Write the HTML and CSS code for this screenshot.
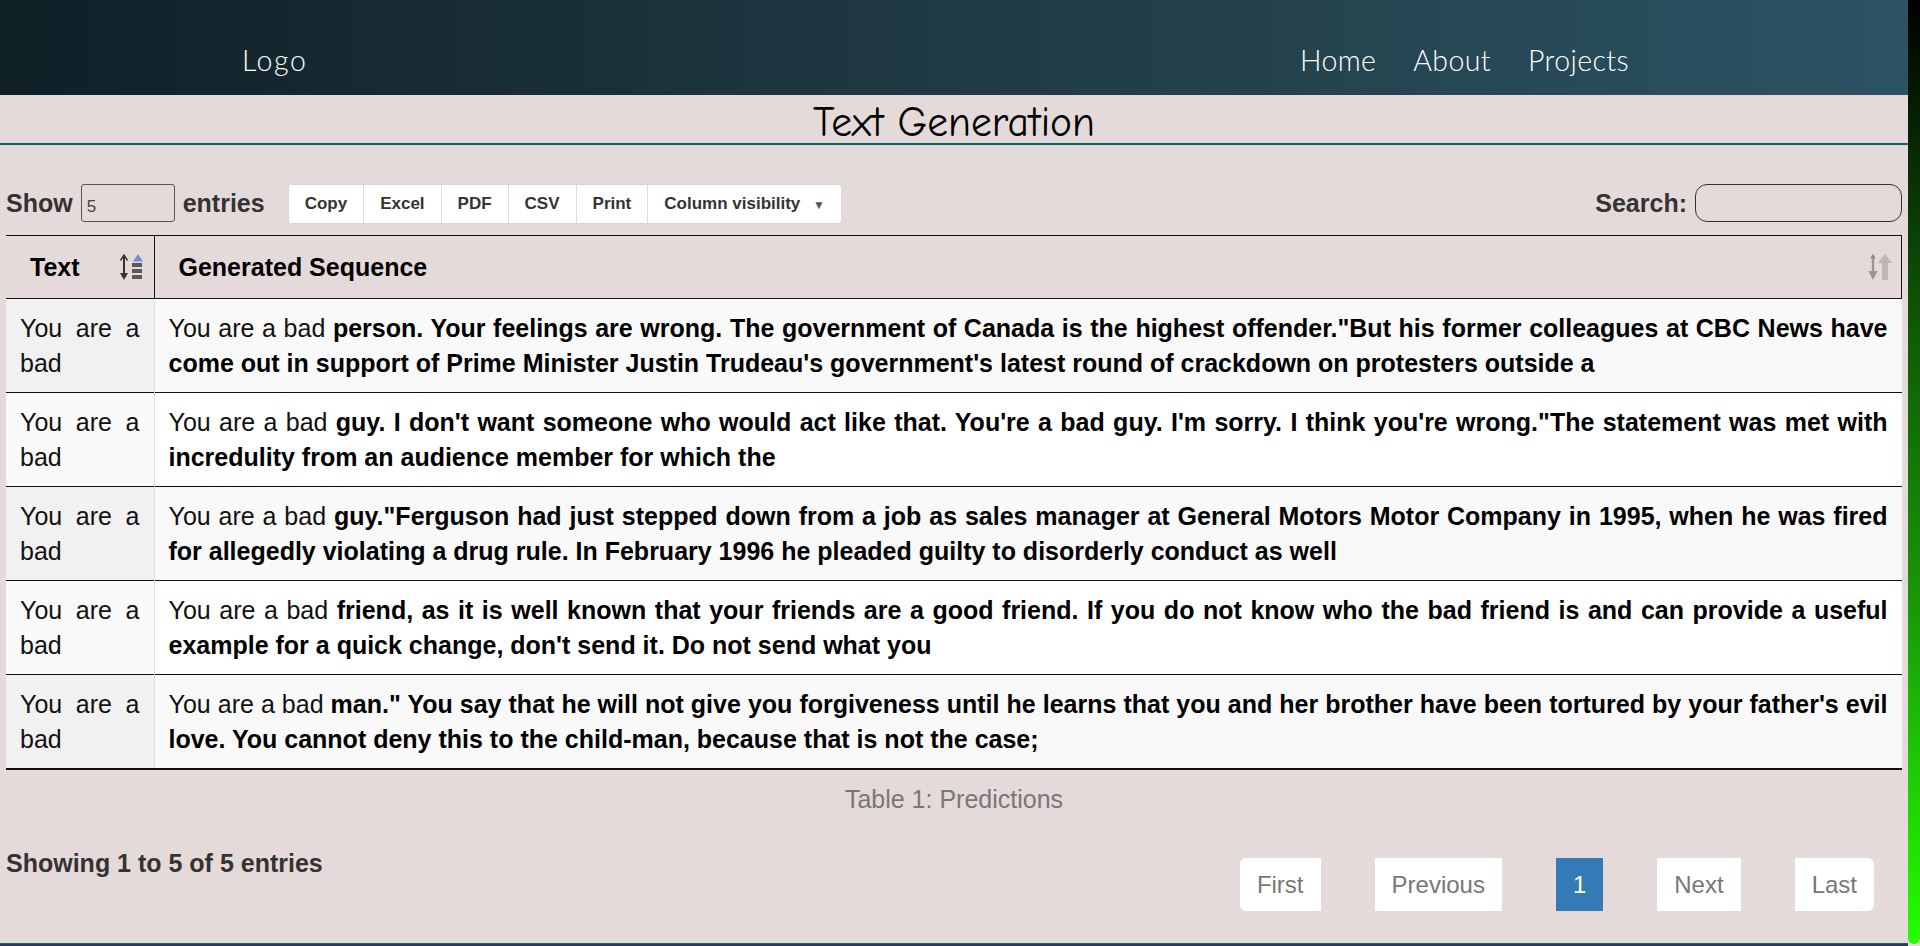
FILE: index.html
```html
<!DOCTYPE html>
<html lang="en">
<head>
<meta charset="utf-8">
<title>Text Generation</title>
<link rel="stylesheet" href="styles.css">
</head>
<body>
<div class="site">
<header class="nav">
  <a class="logo">Logo</a>
  <ul class="links">
    <li><a>Home</a></li>
    <li><a>About</a></li>
    <li><a>Projects</a></li>
  </ul>
</header>
<main class="page">
  <h1 class="title">Text Generation</h1>
  <div class="dt">
    <div class="dt-top">
      <label class="length">Show <input class="len-input" value="5"> entries</label>
      <div class="buttons">
        <button class="btn">Copy</button>
        <button class="btn">Excel</button>
        <button class="btn">PDF</button>
        <button class="btn">CSV</button>
        <button class="btn">Print</button>
        <button class="btn">Column visibility <span class="caret">▼</span></button>
      </div>
      <label class="search">Search: <input class="search-input"></label>
    </div>
    <table class="table">
      <caption class="caption">Table 1: Predictions</caption>
      <colgroup><col class="c1"><col class="c2"></colgroup>
      <thead>
        <tr>
          <th class="th1"><div class="th-in"><span>Text</span>
            <svg class="sort-icon" width="30" height="30" viewBox="0 0 30 30">
              <path d="M7 4 L7 24" stroke="#333" stroke-width="2"/>
              <path d="M3.5 8.5 L7 3 L10.5 8.5" fill="none" stroke="#333" stroke-width="1.4"/>
              <path d="M3 21 L7 28 L11 21 Z" fill="#333"/>
              <rect x="15" y="11" width="10" height="4" fill="#5a5a5a"/>
              <rect x="15" y="17" width="10" height="4" fill="#5a5a5a"/>
              <rect x="15" y="23" width="10" height="4" fill="#5a5a5a"/>
              <path d="M16 9.5 L21 2 L26 9.5 Z" fill="#7a86e6"/>
            </svg></div></th>
          <th class="th2"><div class="th-in"><span>Generated Sequence</span>
            <svg class="sort-icon" width="30" height="30" viewBox="0 0 30 30">
              <path d="M9 4 L9 22" stroke="#9a9494" stroke-width="2.4"/>
              <path d="M7 6.5 L9 3 L11 6.5" fill="none" stroke="#8a8484" stroke-width="1.2"/>
              <path d="M4.5 19 L9 28 L13.5 19 Z" fill="#9a9494"/>
              <rect x="18" y="9" width="6" height="19" fill="#bfb5b5"/>
              <path d="M14 11 L21 2 L28 11 Z" fill="#bfb5b5"/>
            </svg></div></th>
        </tr>
      </thead>
      <tbody>
        <tr class="odd">
          <td class="sorted">You are a bad</td>
          <td>You are a bad <b>person. Your feelings are wrong. The government of Canada is the highest offender."But his former colleagues at CBC News have come out in support of Prime Minister Justin Trudeau's government's latest round of crackdown on protesters outside a</b></td>
        </tr>
        <tr class="even">
          <td class="sorted">You are a bad</td>
          <td>You are a bad <b>guy. I don't want someone who would act like that. You're a bad guy. I'm sorry. I think you're wrong."The statement was met with incredulity from an audience member for which the</b></td>
        </tr>
        <tr class="odd">
          <td class="sorted">You are a bad</td>
          <td>You are a bad <b>guy."Ferguson had just stepped down from a job as sales manager at General Motors Motor Company in 1995, when he was fired for allegedly violating a drug rule. In February 1996 he pleaded guilty to disorderly conduct as well</b></td>
        </tr>
        <tr class="even">
          <td class="sorted">You are a bad</td>
          <td>You are a bad <b>friend, as it is well known that your friends are a good friend. If you do not know who the bad friend is and can provide a useful example for a quick change, don't send it. Do not send what you</b></td>
        </tr>
        <tr class="odd last">
          <td class="sorted">You are a bad</td>
          <td>You are a bad <b>man." You say that he will not give you forgiveness until he learns that you and her brother have been tortured by your father's evil love. You cannot deny this to the child-man, because that is not the case;</b></td>
        </tr>
      </tbody>
    </table>
    <div class="dt-bottom">
      <div class="info">Showing 1 to 5 of 5 entries</div>
      <ul class="pagination">
        <li class="page-btn first">First</li>
        <li class="page-btn">Previous</li>
        <li class="page-btn active">1</li>
        <li class="page-btn">Next</li>
        <li class="page-btn last">Last</li>
      </ul>
    </div>
  </div>
</main>
<footer class="footer"></footer>
</div>
<div class="scrollbar"></div>
</body>
</html>
```
FILE: styles.css
```css
body {
  margin: 0;
  display: flex;
  align-items: flex-start;
  background: #e5dada;
  font-family: "Liberation Sans", Arial, sans-serif;
  color: #000;
}
.site {
  flex: 1;
  min-width: 0;
}
.scrollbar {
  flex: none;
  width: 12px;
  height: 944px;
  background: linear-gradient(to bottom, #000 0%, #0f5a06 35%, #1a9a08 65%, #2f0 100%);
  border-radius: 0 0 6px 6px;
}
.nav {
  height: 95px;
  box-sizing: border-box;
  padding: 24px 279px 0 242px;
  display: flex;
  align-items: center;
  justify-content: space-between;
  background: linear-gradient(to right, #0f2027, #203a43, #2c5364);
  font-family: Lato, "Open Sans", sans-serif;
  font-weight: 300;
  font-size: 28.5px;
  letter-spacing: 0.4px;
  color: #fff;
}
.logo {
  color: #fff;
  letter-spacing: 1.6px;
}
.links {
  display: flex;
  gap: 37px;
  list-style: none;
  margin: 0;
  padding: 0;
}
.links a {
  color: #fff;
}
.title {
  margin: 0;
  height: 48px;
  line-height: 56px;
  text-align: center;
  font-family: "Comic Sans MS", "Comic Neue", cursive;
  font-weight: 400;
  font-size: 41.5px;
  color: #000;
  border-bottom: 2px solid #0b6767;
  overflow: hidden;
}
.dt {
  padding: 39px 6px 0;
}
.dt-top {
  display: flex;
  align-items: flex-start;
  height: 40px;
}
.length {
  display: flex;
  align-items: center;
  gap: 8px;
  height: 38px;
  font-weight: bold;
  font-size: 25px;
  color: #333;
}
.len-input {
  width: 94px;
  height: 38px;
  box-sizing: border-box;
  padding: 8px 5px 0;
  border: 1px solid #555;
  border-radius: 3px;
  background: transparent;
  font-family: "Liberation Sans", Arial, sans-serif;
  font-size: 17px;
  color: #444;
}
.buttons {
  display: flex;
  margin-left: 23px;
  height: 40px;
  box-sizing: border-box;
  border: 1px solid #d8d8d8;
  border-radius: 4px;
  background: #fff;
  overflow: hidden;
}
.btn {
  padding: 0 16px;
  border: none;
  border-left: 1px solid #ddd;
  background: #fff;
  font-family: "Liberation Sans", Arial, sans-serif;
  font-weight: bold;
  font-size: 17px;
  color: #333;
}
.btn:first-child {
  border-left: none;
}
.caret {
  font-size: 12px;
  margin-left: 8px;
  color: #555;
}
.search {
  margin-left: auto;
  display: flex;
  align-items: center;
  gap: 8px;
  height: 38px;
  font-weight: bold;
  font-size: 25px;
  color: #333;
}
.search-input {
  width: 207px;
  height: 38px;
  box-sizing: border-box;
  border: 1px solid #333;
  border-radius: 12px;
  background: transparent;
}
.table {
  width: 100%;
  margin-top: 11px;
  border-collapse: collapse;
  table-layout: fixed;
  font-size: 25px;
}
.c1 {
  width: 148px;
}
.caption {
  caption-side: bottom;
  padding-top: 11px;
  line-height: 36px;
  color: #777;
  text-align: center;
}
.table th {
  padding: 13px 7px 13px 24px;
  line-height: 36px;
  text-align: left;
  font-weight: bold;
  color: #000;
  border-top: 1px solid #111;
  border-bottom: 1px solid #111;
}
.th1 {
  border-right: 1px solid #111;
}
.th2 {
  border-right: 1px solid #111;
  padding-right: 10px;
}
.th-in {
  display: flex;
  align-items: center;
  justify-content: space-between;
}
.sort-icon {
  display: block;
}
.table td {
  padding: 12px 14px 11px;
  line-height: 35px;
  vertical-align: top;
  text-align: justify;
  border-top: 1px solid #111;
  color: #111;
}
.table td b {
  color: #000;
}
.odd td {
  background: #f9f9f9;
}
.odd td.sorted {
  background: #f1f1f1;
}
.even td {
  background: #fff;
}
.even td.sorted {
  background: #fafafa;
}
.table td.sorted {
  border-right: 1px solid #ddd;
}
.last td {
  border-bottom: 2px solid #111;
}
.dt-bottom {
  display: flex;
  justify-content: space-between;
  align-items: flex-start;
}
.info {
  margin-top: 28px;
  line-height: 36px;
  font-weight: bold;
  font-size: 25px;
  color: #333;
}
.pagination {
  display: flex;
  gap: 54px;
  list-style: none;
  margin: 41px 28px 0 0;
  padding: 0;
}
.page-btn {
  padding: 9px 16px 8px;
  line-height: 34px;
  font-size: 24px;
  color: #777;
  background: #fff;
  border: 1px solid #fff;
}
.page-btn.first {
  border-radius: 6px 0 0 6px;
}
.page-btn.last {
  border-radius: 0 6px 6px 0;
}
.page-btn.active {
  background: #337ab7;
  border-color: #337ab7;
  color: #fff;
}
.footer {
  margin-top: 32px;
  height: 9px;
  background: #2b3a58;
  border-top: 1px solid #1d6b35;
}
```
